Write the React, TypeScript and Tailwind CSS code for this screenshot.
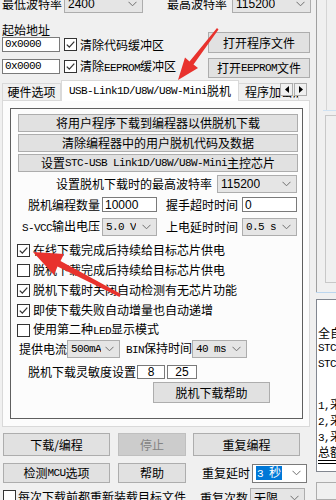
import React from "react";

const cjk = "font-['Noto_Sans_CJK_SC',sans-serif]";
const mono = "font-['Liberation_Mono','Noto_Sans_CJK_SC',monospace] text-[11px] tracking-[-0.6px]";

function M({ children }: { children: React.ReactNode }) {
  return <span className={mono}>{children}</span>;
}

function Btn({
  children,
  className = "",
  disabled = false,
}: {
  children: React.ReactNode;
  className?: string;
  disabled?: boolean;
}) {
  return (
    <div
      className={`flex shrink-0 items-center justify-center whitespace-nowrap border ${
        disabled
          ? "border-[#bfbfbf] bg-[#cccccc] text-[#838383]"
          : "border-[#adadad] bg-[#e1e1e1] text-black"
      } ${className}`}>
      {children}
    </div>
  );
}

function Chevron() {
  return (
    <svg width="9" height="6" viewBox="0 0 9 6" className="shrink-0">
      <polyline points="0.5,0.8 4.5,4.8 8.5,0.8" fill="none" stroke="#6f6f6f" strokeWidth="1" />
    </svg>
  );
}

function Sel({
  children,
  className = "",
  white = false,
}: {
  children: React.ReactNode;
  className?: string;
  white?: boolean;
}) {
  return (
    <div
      className={`flex shrink-0 items-center justify-between whitespace-nowrap border pl-[3px] pr-[5px] ${
        white ? "border-[#7a7a7a] bg-white" : "border-[#adadad] bg-[#e5e5e5]"
      } ${className}`}>
      <span className="flex items-center overflow-hidden">{children}</span>
      <Chevron />
    </div>
  );
}

function Inp({ children, className = "" }: { children: React.ReactNode; className?: string }) {
  return (
    <div
      className={`flex shrink-0 items-center whitespace-nowrap border border-[#7a7a7a] bg-white px-[2px] ${className}`}>
      {children}
    </div>
  );
}

function Chk({ on = false, className = "" }: { on?: boolean; className?: string }) {
  return (
    <div className={`h-[13px] w-[13px] shrink-0 border border-[#333333] bg-white ${className}`}>
      {on && (
        <svg width="11" height="11" viewBox="0 0 11 11">
          <polyline points="1.8,5.6 4.3,8.1 9.3,2.6" fill="none" stroke="#333" strokeWidth="1.3" />
        </svg>
      )}
    </div>
  );
}

const num = "font-['Liberation_Sans',sans-serif] text-[12px]";

export default function App() {
  return (
    <div
      className={`relative flex h-[500px] w-[336px] overflow-hidden bg-[#f0f0f0] text-[12px] leading-none text-black ${cjk}`}>
      {/* 왼쪽 본문 */}
      <div className="flex w-[316px] shrink-0 flex-col">
        {/* 波特率 */}
        <div className="-mt-[6px] flex h-[19px] shrink-0 items-center">
          <span className="w-[64px] pl-[2px]">最低波特率</span>
          <Sel className="h-[19px] w-[79px]">
            <span className={num}>2400</span>
          </Sel>
          <span className="ml-[24px] w-[65px]">最高波特率</span>
          <Sel className="h-[19px] w-[79px]">
            <span className={num}>115200</span>
          </Sel>
        </div>

        {/* 起始地址 + 打开文件 */}
        <div className="flex h-[67px] shrink-0">
          <div className="flex flex-col pl-[2px] pt-[10px]">
            <div className="h-[14px] leading-[14px]">起始地址</div>
            <div className="flex h-[15px] items-center">
              <Inp className="h-[15px] w-[58px]">
                <M>0x0000</M>
              </Inp>
              <Chk on className="ml-[4px]" />
              <span className="ml-[3px]">清除代码缓冲区</span>
            </div>
            <div className="mt-[7px] flex h-[15px] items-center">
              <Inp className="h-[15px] w-[58px]">
                <M>0x0000</M>
              </Inp>
              <Chk on className="ml-[4px]" />
              <span className="ml-[3px] whitespace-nowrap">
                清除<M>EEPROM</M>缓冲区
              </span>
            </div>
          </div>
          <div className="ml-auto flex flex-col pr-[6px] pt-[19px]">
            <Btn className="h-[21px] w-[102px]">打开程序文件</Btn>
            <Btn className="mt-[5px] h-[20px] w-[102px]">
              打开<M>EEPROM</M>文件
            </Btn>
          </div>
        </div>

        {/* tabs */}
        <div className="relative flex h-[20px] shrink-0 items-end pl-[2px]">
          <div className="flex h-[17px] w-[59px] items-center justify-center border border-b-0 border-[#d9d9d9] bg-[#f0f0f0]">
            硬件选项
          </div>
          <div className="relative z-10 -mb-[1px] flex h-[21px] w-[178px] items-center justify-center whitespace-nowrap border border-b-0 border-[#d9d9d9] bg-white">
            <M>USB-Link1D/U8W/U8W-Mini</M>脱机
          </div>
          <div className="flex h-[17px] w-[60px] items-center overflow-hidden whitespace-nowrap border border-b-0 border-l-0 border-[#d9d9d9] bg-[#f0f0f0] pl-[6px]">
            程序加密后传输
          </div>
          <div className="absolute left-[280px] top-[3px] flex">
            <div className="flex h-[13px] w-[13px] items-center justify-center border border-[#adadad] bg-[#f0f0f0]">
              <svg width="4" height="7" viewBox="0 0 4 7">
                <polygon points="4,0 0,3.5 4,7" fill="#000" />
              </svg>
            </div>
            <div className="ml-[1px] flex h-[13px] w-[13px] items-center justify-center border border-[#adadad] bg-[#f0f0f0]">
              <svg width="4" height="7" viewBox="0 0 4 7">
                <polygon points="0,0 4,3.5 0,7" fill="#000" />
              </svg>
            </div>
          </div>
        </div>

        {/* tab panel */}
        <div className="ml-[2px] h-[327px] w-[308px] shrink-0 border border-[#d9d9d9] bg-[#fcfcfc] pl-[7px] pt-[7px]">
          <div className="flex h-[311px] w-[293px] flex-col border border-[#5f5f5f] pl-[7px] pt-[5px]">
            <Btn className="h-[18px] w-[280px]">将用户程序下载到编程器以供脱机下载</Btn>
            <Btn className="mt-[2px] h-[18px] w-[280px]">清除编程器中的用户脱机代码及数据</Btn>
            <Btn className="mt-[2px] h-[18px] w-[280px]">
              设置<M>STC-USB Link1D/U8W/U8W-Mini</M>主控芯片
            </Btn>

            <div className="mt-[3px] flex h-[18px] items-center">
              <span className="w-[194px] text-right">设置脱机下载时的最高波特率</span>
              <Sel className="ml-[5px] h-[18px] w-[80px]">
                <span className={num}>115200</span>
              </Sel>
            </div>

            <div className="mt-[4px] flex h-[15px] items-center">
              <span className="w-[82px] text-right">脱机编程数量</span>
              <Inp className="ml-[2px] h-[15px] w-[55px]">
                <span className={num}>10000</span>
              </Inp>
              <span className="w-[81px] text-right">握手超时时间</span>
              <Inp className="ml-[4px] h-[15px] w-[55px]">
                <span className={num}>0</span>
              </Inp>
            </div>

            <div className="mt-[6px] flex h-[18px] items-center">
              <span className="w-[82px] whitespace-nowrap text-right">
                <M>S-VCC</M>输出电压
              </span>
              <Sel className="ml-[2px] h-[18px] w-[55px]">
                <M>5.0 V</M>
              </Sel>
              <span className="w-[81px] text-right">上电延时时间</span>
              <Sel className="ml-[4px] h-[18px] w-[55px]">
                <M>0.5 s</M>
              </Sel>
            </div>

            <div className="mt-[4px] flex flex-col">
              {[
                [true, "在线下载完成后持续给目标芯片供电"],
                [false, "脱机下载完成后持续给目标芯片供电"],
                [true, "脱机下载时关闭自动检测有无芯片功能"],
                [true, "即使下载失败自动增量也自动递增"],
              ].map(([on, t]) => (
                <div key={t as string} className="flex h-[20px] items-center">
                  <Chk on={on as boolean} className="-ml-[1px]" />
                  <span className="ml-[3px] whitespace-nowrap">{t as string}</span>
                </div>
              ))}
              <div className="flex h-[20px] items-center">
                <Chk className="-ml-[1px]" />
                <span className="ml-[3px] whitespace-nowrap">
                  使用第二种<M>LED</M>显示模式
                </span>
              </div>
            </div>

            <div className="flex h-[18px] items-center">
              <span className="ml-[1px] w-[48px]">提供电流</span>
              <Sel className="h-[18px] w-[53px]">
                <M>500mA</M>
              </Sel>
              <span className="w-[72px] whitespace-nowrap text-right">
                <M>BIN</M>保持时间
              </span>
              <Sel className="h-[18px] w-[55px]">
                <M>40 ms</M>
              </Sel>
            </div>

            <div className="mt-[7px] flex h-[14px] items-center">
              <span className="ml-[10px] w-[109px] whitespace-nowrap">脱机下载灵敏度设置</span>
              <Inp className="h-[14px] w-[28px] justify-center">
                <span className={num}>8</span>
              </Inp>
              <Inp className="ml-[2px] h-[14px] w-[30px] justify-center">
                <span className={num}>25</span>
              </Inp>
            </div>

            <Btn className="ml-[135px] mt-[3px] h-[21px] w-[117px]">脱机下载帮助</Btn>
          </div>
        </div>

        {/* bottom buttons */}
        <div className="mt-[6px] flex h-[23px] shrink-0 items-center pl-[3px]">
          <Btn className="h-[23px] w-[107px]">下载/编程</Btn>
          <Btn disabled className="ml-[8px] h-[23px] w-[68px]">
            停止
          </Btn>
          <Btn className="ml-[7px] h-[23px] w-[107px]">重复编程</Btn>
        </div>
        <div className="mt-[7px] flex h-[20px] shrink-0 items-center pl-[3px]">
          <Btn className="h-[20px] w-[107px]">
            检测<M>MCU</M>选项
          </Btn>
          <Btn className="ml-[8px] h-[20px] w-[68px]">帮助</Btn>
          <span className="ml-[16px] w-[48px]">重复延时</span>
          <Sel white className="ml-[2px] h-[19px] w-[55px] pl-[2px]">
            <span className="bg-[#0078d7] px-[1px] text-white">
              <M>3 </M>秒
            </span>
          </Sel>
        </div>
        <div className="mt-[5px] flex h-[19px] shrink-0 items-center pl-[3px]">
          <Chk className="self-start mt-[2px]" />
          <span className="ml-[2px] w-[182px] self-start whitespace-nowrap pt-[3px]">每次下载前都重新装载目标文件</span>
          <span className="w-[50px]">重复次数</span>
          <Sel className="h-[19px] w-[55px]">无限</Sel>
        </div>
      </div>

      {/* 오른쪽 출력 영역 */}
      <div className="flex flex-1 flex-col">
        <div className="flex h-[292px] shrink-0 flex-col border-l border-[#a0a0a0] pl-[6px]">
          <div className="h-[110px] border-r border-[#d5d5d5] w-[4px]" />
          <div className="h-px bg-[#cfe2f3]" />
          <div className="mt-[4px] h-[168px] border border-r-0 border-[#c8c8c8] bg-[#f0f0f0] ml-[2px]" />
        </div>
        <div className="h-px shrink-0 bg-[#bcd6ee]" />
        <div className="mt-[6px] h-[173px] shrink-0 overflow-hidden border border-r-0 border-[#828790] bg-white pl-[1px] pt-[26px] leading-[13px]">
          <div className="whitespace-nowrap">全自动下载</div>
          <div className="whitespace-nowrap">
            <M>STC-ISP</M>
          </div>
          <div className="whitespace-nowrap">
            <M>STC-ISP</M>
          </div>
          <div className="h-[26px]" />
          <div className="whitespace-nowrap">
            <M>1,</M>采用
          </div>
          <div className="whitespace-nowrap">
            <M>2,</M>采用
          </div>
          <div className="whitespace-nowrap">
            <M>3,</M>采用
          </div>
          <div className="whitespace-nowrap">总额</div>
          <div className="mt-[2px] h-[4px] border-y border-black" />
        </div>
        <div className="mt-[10px] flex-1 border border-r-0 border-[#adadad] bg-[#f0f0f0]" />
      </div>

      {/* 빨간 화살표 */}
      <svg
        className="pointer-events-none absolute left-0 top-0"
        width="336"
        height="500"
        viewBox="0 0 336 500">
        <polygon points="178,80 185,57.5 189.5,61.5 217,28 218.5,29.5 193.5,64.5 198,68" fill="#e8322d" />
        <polygon points="33,252 64,254 60.5,261 121,294 119.5,297 57.5,266.5 54,275" fill="#e8322d" />
      </svg>
    </div>
  );
}
